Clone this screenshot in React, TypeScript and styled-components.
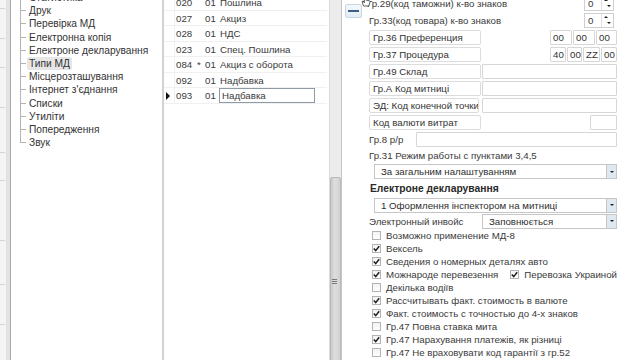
import styled, { createGlobalStyle } from "styled-components";

const GlobalStyle = createGlobalStyle`
  html, body { margin: 0; padding: 0; background: #fff; }
  body {
    font-family: "Liberation Sans", Arial, sans-serif;
    font-size: 9.7px;
    color: #3a3a3a;
  }
  * { box-sizing: border-box; }
`;

const Screen = styled.div`
  display: flex;
  width: 640px;
  height: 360px;
  overflow: hidden;
  background: #fff;
`;

/* ---------- far left: cut off neighbour window ---------- */

const EdgeStrip = styled.div`
  width: 11px;
  flex: none;
  display: flex;
  flex-direction: column;
  background: #f4f4f4;
  border-right: 1px solid #a9a9a9;
  box-shadow: inset -4px 0 0 #e2e2e2;
`;

const EdgeCell = styled.div<{ $h: number }>`
  height: ${(p) => p.$h}px;
  flex: none;
  border-bottom: 1px solid #d4d4d4;
  margin-right: 5px;
`;

/* ---------- settings tree ---------- */

const TreePanel = styled.div`
  width: 153px;
  flex: none;
  border-right: 2px solid #d2d2d2;
  padding-left: 9px;
`;

const TreeList = styled.ul`
  position: relative;
  list-style: none;
  margin: -9px 0 0 0;
  padding: 0;

  &::before {
    content: "";
    position: absolute;
    left: 0;
    top: 0;
    bottom: 6px;
    border-left: 1px solid #b4b4b4;
  }
`;

const TreeItem = styled.li<{ $selected?: boolean }>`
  position: relative;
  height: 13.2px;
  line-height: 13.2px;
  margin-left: 7px;
  padding: 0 2px;
  width: fit-content;
  white-space: nowrap;
  font-size: 10.2px;
  color: #333;
  background: ${(p) => (p.$selected ? "#e6e6e6" : "transparent")};
  border-radius: 2px;

  &::before {
    content: "";
    position: absolute;
    left: -7px;
    top: 6px;
    width: 6px;
    border-top: 1px solid #b4b4b4;
  }
`;

/* ---------- payments grid ---------- */

const GridPanel = styled.div`
  width: 166px;
  flex: none;
  border-right: 1px solid #dadada;
  padding-right: 2px;
`;

const GridRows = styled.div`
  margin-top: -4.75px;
`;

const GridRow = styled.div`
  display: grid;
  grid-template-columns: 11px 21px 8px 15px 1fr;
  height: 15.5px;
  line-height: 15px;
  border-bottom: 1px solid #f0f0f0;
  color: #3a3a3a;
`;

const Indicator = styled.div`
  display: flex;
  align-items: center;
  padding-left: 2px;
  border-right: 1px solid #f0f0f0;
`;

const Arrow = styled.span`
  width: 0;
  height: 0;
  border-top: 4px solid transparent;
  border-bottom: 4px solid transparent;
  border-left: 4px solid #111;
`;

const Cell = styled.div`
  padding-left: 1px;
  white-space: nowrap;
`;

const EditCell = styled.div`
  margin-right: 12px;
  padding-left: 2px;
  height: 15px;
  line-height: 13px;
  border: 1px solid #8f9aa6;
  background: #fff;
`;

/* ---------- scrollbar ---------- */

const ScrollBar = styled.div`
  width: 12px;
  flex: none;
  background: #ececec;
  border-right: 1px solid #c6c6c6;
  display: flex;
  flex-direction: column;
`;

const Thumb = styled.div`
  flex: none;
  margin-top: 177px;
  height: 210px;
  background: linear-gradient(to right, #c9c9c9, #dedede 40%, #d2d2d2);
  border: 1px solid #b9b9b9;
  border-radius: 2px;
  display: flex;
  align-items: center;
  padding-left: 1px;
`;

const Grip = styled.div`
  width: 5px;
  height: 6px;
  background: repeating-linear-gradient(to bottom, #7a7a7a 0 1px, transparent 1px 2px);
`;

/* ---------- right settings form ---------- */

const Form = styled.div`
  flex: 1;
  min-width: 0;
  display: flex;
  position: relative;
`;

const Gutter = styled.div`
  width: 25px;
  flex: none;
  padding: 4px 0 0 3px;
`;

const CollapseButton = styled.div`
  width: 17px;
  height: 14px;
  border: 1px solid #c9d6e3;
  border-radius: 2px;
  background: linear-gradient(#f4f8fc, #e3ecf5);
  display: flex;
  align-items: center;
  justify-content: center;

  &::after {
    content: "";
    width: 11px;
    height: 2px;
    background: #3d5f86;
  }
`;

const Cursor = styled.svg`
  position: absolute;
  left: 19px;
  top: -5px;
`;

const Content = styled.div`
  flex: 1;
  min-width: 0;
  display: flex;
  flex-direction: column;
  margin-top: -5.5px;
  padding-right: 23px;
`;

const TextRow = styled.div<{ $h?: number; $indent?: number; $bold?: boolean }>`
  height: ${(p) => p.$h ?? 17}px;
  flex: none;
  display: flex;
  align-items: center;
  padding-left: ${(p) => p.$indent ?? 2}px;
  white-space: nowrap;
  font-weight: ${(p) => (p.$bold ? 700 : 400)};
  font-size: ${(p) => (p.$bold ? "10.3px" : "inherit")};
  color: ${(p) => (p.$bold ? "#2a2a2a" : "#3a3a3a")};
`;

const Spacer = styled.div`
  flex: 1;
`;

const Spin = styled.div`
  width: 30px;
  height: 15px;
  margin-right: 3px;
  border: 1px solid #cfcfcf;
  display: flex;
  align-items: center;
  padding-left: 3px;
  background: #fff;
`;

const SpinButtons = styled.div`
  margin-left: auto;
  width: 12px;
  height: 100%;
  display: flex;
  flex-direction: column;
  border-left: 1px solid #e2e2e2;
`;

const SpinArrow = styled.div<{ $up?: boolean }>`
  flex: 1;
  display: flex;
  align-items: center;
  justify-content: ${(p) => (p.$up ? "flex-start" : "flex-end")};
  padding: 0 2px;

  &::after {
    content: "";
    border-left: 2px solid transparent;
    border-right: 2px solid transparent;
    ${(p) => (p.$up ? "border-bottom: 2px solid #222;" : "border-top: 2px solid #222;")}
  }
`;

const FieldRow = styled.div`
  height: 17px;
  flex: none;
  display: flex;
  align-items: center;
  padding-left: 2px;
  gap: 1px;
`;

const LabelBox = styled.div<{ $w?: number }>`
  width: ${(p) => p.$w ?? 112}px;
  height: 15px;
  flex: none;
  border: 1px solid #dcdcdc;
  border-radius: 2px;
  padding-left: 3px;
  line-height: 13px;
  white-space: nowrap;
  overflow: hidden;
  color: #333;
  background: #fff;
`;

const Input = styled.div<{ $w?: number; $gap?: number }>`
  ${(p) => (p.$w ? `width: ${p.$w}px; flex: none;` : "flex: 1;")}
  margin-left: ${(p) => p.$gap ?? 0}px;
  height: 15px;
  border: 1px solid #d6d6d6;
  border-radius: 1px;
  padding-left: 2px;
  line-height: 13px;
  background: #fff;
  color: #333;
`;

const PlainLabel = styled.div<{ $w: number }>`
  width: ${(p) => p.$w}px;
  flex: none;
  white-space: nowrap;
`;

const Select = styled.div<{ $offset?: number }>`
  flex: 1;
  margin-left: ${(p) => p.$offset ?? 0}px;
  height: 15px;
  border: 1px solid #c6c6c6;
  display: flex;
  align-items: stretch;
  background: #fff;
`;

const SelectValue = styled.div`
  flex: 1;
  padding-left: 6px;
  line-height: 13px;
  white-space: nowrap;
  overflow: hidden;
  font-weight: 400;
  font-size: 9.7px;
  color: #2e2e2e;
`;

const SelectButton = styled.div`
  width: 10px;
  flex: none;
  background: #dde8f0;
  border-left: 1px solid #c6c6c6;
  display: flex;
  align-items: center;
  justify-content: center;

  &::after {
    content: "";
    border-left: 2px solid transparent;
    border-right: 2px solid transparent;
    border-top: 2px solid #222;
  }
`;

const CheckRow = styled.div`
  height: 13px;
  flex: none;
  display: flex;
  align-items: center;
  padding-left: 5px;
`;

const CheckItem = styled.div<{ $w?: number }>`
  display: flex;
  align-items: center;
  gap: 5px;
  white-space: nowrap;
  ${(p) => (p.$w ? `width: ${p.$w}px;` : "")}
`;

const Box = styled.div`
  width: 9px;
  height: 9px;
  flex: none;
  border: 1px solid #b3b3b3;
  background: linear-gradient(#f2f2f2, #ffffff);
  display: flex;
  align-items: center;
  justify-content: center;
`;

const Check = ({ checked, label, w }: { checked: boolean; label: string; w?: number }) => (
  <CheckItem $w={w}>
    <Box>
      {checked && (
        <svg width="7" height="7" viewBox="0 0 7 7">
          <path d="M0.8 3.6 L2.7 5.6 L6.2 1.2" fill="none" stroke="#1e1e1e" strokeWidth="1.5" />
        </svg>
      )}
    </Box>
    <span>{label}</span>
  </CheckItem>
);

const treeItems = [
  "Статистика",
  "Друк",
  "Перевірка МД",
  "Електронна копія",
  "Електроне декларування",
  "Типи МД",
  "Місцерозташування",
  "Інтернет з'єднання",
  "Списки",
  "Утиліти",
  "Попередження",
  "Звук",
];

const payments = [
  { code: "020", star: "", kind: "01", name: "Пошлина" },
  { code: "027", star: "", kind: "01", name: "Акциз" },
  { code: "028", star: "", kind: "01", name: "НДС" },
  { code: "023", star: "", kind: "01", name: "Спец. Пошлина" },
  { code: "084", star: "*", kind: "01", name: "Акциз с оборота" },
  { code: "092", star: "", kind: "01", name: "Надбавка" },
  { code: "093", star: "", kind: "01", name: "Надбавка", current: true },
];

const checks = [
  { checked: false, label: "Возможно применение МД-8" },
  { checked: true, label: "Вексель" },
  { checked: true, label: "Сведения о номерных деталях авто" },
  { checked: true, label: "Можнароде перевезення", extra: { checked: true, label: "Перевозка Украиной" } },
  { checked: false, label: "Декілька водіїв" },
  { checked: true, label: "Рассчитывать факт. стоимость в валюте" },
  { checked: true, label: "Факт. стоимость с точностью до 4-х знаков" },
  { checked: false, label: "Гр.47 Повна ставка мита" },
  { checked: true, label: "Гр.47 Нарахування платежів, як різниці" },
  { checked: false, label: "Гр.47 Не враховувати код гарантії з гр.52" },
];

export default function App() {
  return (
    <>
      <GlobalStyle />
      <Screen>
        <EdgeStrip>
          {[9, 30, 29, 40, 45, 28, 60, 44, 40].map((h, i) => (
            <EdgeCell key={i} $h={h} />
          ))}
        </EdgeStrip>

        <TreePanel>
          <TreeList>
            {treeItems.map((t) => (
              <TreeItem key={t} $selected={t === "Типи МД"}>
                {t}
              </TreeItem>
            ))}
          </TreeList>
        </TreePanel>

        <GridPanel>
          <GridRows>
            {payments.map((p) => (
              <GridRow key={p.code}>
                <Indicator>{p.current && <Arrow />}</Indicator>
                <Cell>{p.code}</Cell>
                <Cell>{p.star}</Cell>
                <Cell>{p.kind}</Cell>
                {p.current ? <EditCell>{p.name}</EditCell> : <Cell>{p.name}</Cell>}
              </GridRow>
            ))}
          </GridRows>
        </GridPanel>

        <ScrollBar>
          <Thumb>
            <Grip />
          </Thumb>
        </ScrollBar>

        <Form>
          <Gutter>
            <CollapseButton />
          </Gutter>
          <Content>
            <TextRow $indent={0}>
              Гр.29(код таможни) к-во знаков
              <Spacer />
              <Spin>
                0
                <SpinButtons>
                  <SpinArrow $up />
                  <SpinArrow />
                </SpinButtons>
              </Spin>
            </TextRow>
            <TextRow>
              Гр.33(код товара) к-во знаков
              <Spacer />
              <Spin>
                0
                <SpinButtons>
                  <SpinArrow $up />
                  <SpinArrow />
                </SpinButtons>
              </Spin>
            </TextRow>
            <FieldRow>
              <LabelBox>Гр.36 Преференция</LabelBox>
              <Spacer />
              <Input $w={22}>00</Input>
              <Input $w={22}>00</Input>
              <Input $w={21}>00</Input>
            </FieldRow>
            <FieldRow>
              <LabelBox>Гр.37 Процедура</LabelBox>
              <Spacer />
              <Input $w={16}>40</Input>
              <Input $w={15}>00</Input>
              <Input $w={17}>ZZ</Input>
              <Input $w={16}>00</Input>
            </FieldRow>
            <FieldRow>
              <LabelBox>Гр.49 Склад</LabelBox>
              <Input />
            </FieldRow>
            <FieldRow>
              <LabelBox>Гр.А Код митниці</LabelBox>
              <Input />
            </FieldRow>
            <FieldRow>
              <LabelBox $w={110}>ЭД: Код конечной точки</LabelBox>
              <Input $gap={2} />
            </FieldRow>
            <FieldRow>
              <LabelBox>Код валюти витрат</LabelBox>
              <Spacer />
              <Input $w={27} />
            </FieldRow>
            <FieldRow>
              <PlainLabel $w={46}>Гр.8 р/р</PlainLabel>
              <Input />
            </FieldRow>
            <TextRow $h={15.5}>Гр.31 Режим работы с пунктами 3,4,5</TextRow>
            <TextRow>
              <Select $offset={5}>
                <SelectValue>За загальним налаштуванням</SelectValue>
                <SelectButton />
              </Select>
            </TextRow>
            <TextRow $bold $indent={3}>
              Електроне декларування
            </TextRow>
            <TextRow $h={16}>
              <Select $offset={5}>
                <SelectValue>1 Оформлення інспектором на митниці</SelectValue>
                <SelectButton />
              </Select>
            </TextRow>
            <TextRow $h={16}>
              <PlainLabel $w={113}>Электронный инвойс</PlainLabel>
              <Select>
                <SelectValue>Заповнюється</SelectValue>
                <SelectButton />
              </Select>
            </TextRow>
            {checks.map((c) => (
              <CheckRow key={c.label}>
                <Check checked={c.checked} label={c.label} w={c.extra ? 149 : undefined} />
                {c.extra && <Check checked={c.extra.checked} label={c.extra.label} />}
              </CheckRow>
            ))}
          </Content>
          <Cursor width="10" height="12" viewBox="0 0 10 12">
            <path
              d="M2.5 11 L1 6.5 L2.2 6 L3.3 7.8 L3.3 1.2 Q4 0.4 4.7 1.2 L4.7 5 L8.5 5.8 Q9.2 6.2 8.8 7.5 L7.8 11 Z"
              fill="#fff"
              stroke="#333"
              strokeWidth="0.8"
            />
          </Cursor>
        </Form>
      </Screen>
    </>
  );
}
